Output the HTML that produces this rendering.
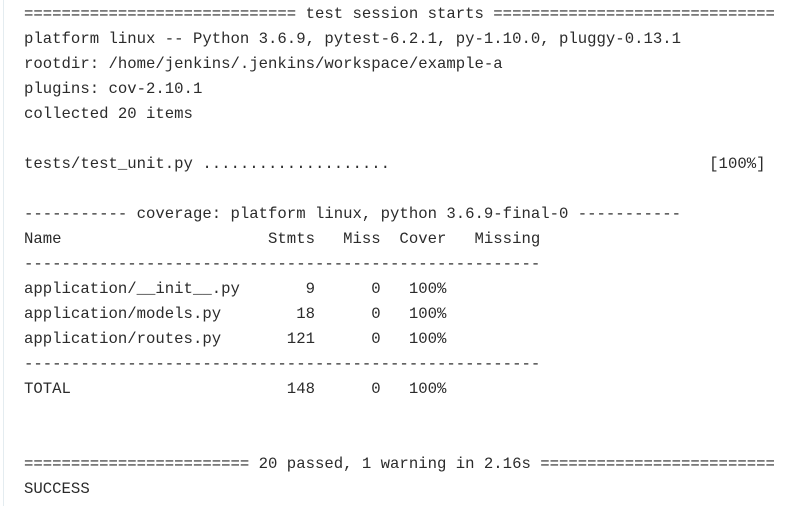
<!DOCTYPE html>
<html><head><style>
html,body{margin:0;padding:0;background:#fff;width:800px;height:506px;overflow:hidden}
.b{position:absolute;left:3px;top:0;width:1px;height:506px;background:#e4ecf0}
pre{position:absolute;left:24px;top:2px;margin:0;font-family:"Liberation Mono",monospace;font-size:15.65px;line-height:25px;color:#2b2b2b}
</style></head><body><div class="b"></div><pre>============================= test session starts ==============================
platform linux -- Python 3.6.9, pytest-6.2.1, py-1.10.0, pluggy-0.13.1
rootdir: /home/jenkins/.jenkins/workspace/example-a
plugins: cov-2.10.1
collected 20 items

tests/test_unit.py ....................                                  [100%]

----------- coverage: platform linux, python 3.6.9-final-0 -----------
Name                      Stmts   Miss  Cover   Missing
-------------------------------------------------------
application/__init__.py       9      0   100%
application/models.py        18      0   100%
application/routes.py       121      0   100%
-------------------------------------------------------
TOTAL                       148      0   100%


======================== 20 passed, 1 warning in 2.16s =========================
SUCCESS</pre></body></html>
